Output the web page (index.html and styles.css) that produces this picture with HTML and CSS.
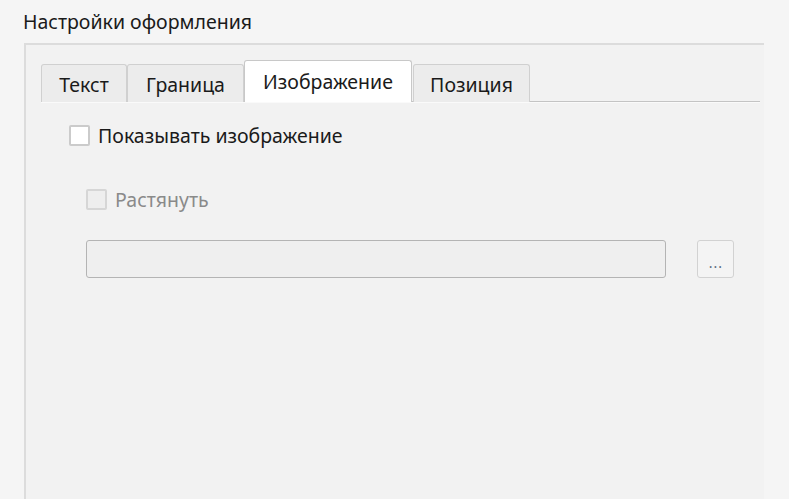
FILE: index.html
```html
<!DOCTYPE html>
<html lang="ru">
<head>
    <meta charset="UTF-8">
    <title>Настройки оформления</title>
    <link rel="stylesheet" href="styles.css">
</head>
<body>
    <div class="group-title">Настройки оформления</div>
    <div class="group">
        <div class="tabs">
            <div class="tab tab-text">Текст</div>
            <div class="tab tab-border">Граница</div>
            <div class="tab tab-image active">Изображение</div>
            <div class="tab tab-pos">Позиция</div>
        </div>
        <div class="pane">
            <label class="check-row">
                <span class="box"></span>
                <span>Показывать изображение</span>
            </label>
            <div class="sub">
                <label class="check-row disabled">
                    <span class="box"></span>
                    <span>Растянуть</span>
                </label>
                <div class="file-row">
                    <div class="path-field"></div>
                    <button class="browse">...</button>
                </div>
            </div>
        </div>
    </div>
</body>
</html>
```
FILE: styles.css
```css
html, body {
    height: 100%;
}

body {
    margin: 0;
    background: #f5f5f5;
    font-family: "Noto Sans", "Open Sans", sans-serif;
    font-size: 19.5px;
    color: #1a1a1a;
    overflow: hidden;
    display: flex;
    flex-direction: column;
}

.group-title {
    padding: 9px 0 0 23px;
    height: 33px;
    line-height: 26px;
    box-sizing: border-box;
}

.group {
    flex: 1;
    margin-left: 24px;
    width: 740px;
    box-sizing: border-box;
    background: #f2f2f2;
    border-left: 2px solid #dcdcdc;
    border-top: 2px solid #dcdcdc;
    margin-top: 10px;
    padding: 15px 4px 0 15px;
}

.tabs {
    display: flex;
    align-items: flex-end;
    height: 41px;
    border-bottom: 1px solid #c4c4c4;
    box-shadow: 0 1px 0 #fafafa;
}

.tab {
    height: 38px;
    box-sizing: border-box;
    margin-bottom: -1px;
    background: #ececec;
    border: 1px solid #d0d0d0;
    border-bottom: none;
    border-radius: 3px 3px 0 0;
    display: flex;
    align-items: center;
    justify-content: center;
    padding-top: 2px;
}

.tab-text { width: 86px; }
.tab-border { width: 117px; }
.tab-image { width: 168px; }
.tab-pos { width: 117px; margin-left: 1px; }

.tab.active {
    height: 42px;
    background: #ffffff;
    border-color: #c8c8c8;
    padding-top: 0;
}

.pane {
    padding: 22px 0 0 28px;
}

.check-row {
    display: flex;
    align-items: center;
    gap: 8px;
    height: 22px;
}

.box {
    width: 21px;
    height: 21px;
    box-sizing: border-box;
    background: #ffffff;
    border: 2px solid #cbcbcb;
    border-radius: 2px;
}

.sub {
    padding: 42px 0 0 17px;
}

.check-row.disabled {
    color: #8a8a8a;
}

.check-row.disabled .box {
    background: #eeeeee;
    border-color: #d6d6d6;
}

.file-row {
    display: flex;
    gap: 31px;
    margin-top: 30px;
}

.path-field {
    width: 580px;
    height: 38px;
    box-sizing: border-box;
    background: #efefef;
    border: 1px solid #b4b4b4;
    border-radius: 3px;
}

.browse {
    width: 37px;
    height: 38px;
    box-sizing: border-box;
    background: #f4f4f4;
    border: 1px solid #d2d2d2;
    border-radius: 3px;
    font-family: inherit;
    font-size: 14px;
    letter-spacing: 1px;
    color: #5a6a80;
    padding: 6px 0 0 1px;
    cursor: pointer;
}
```
